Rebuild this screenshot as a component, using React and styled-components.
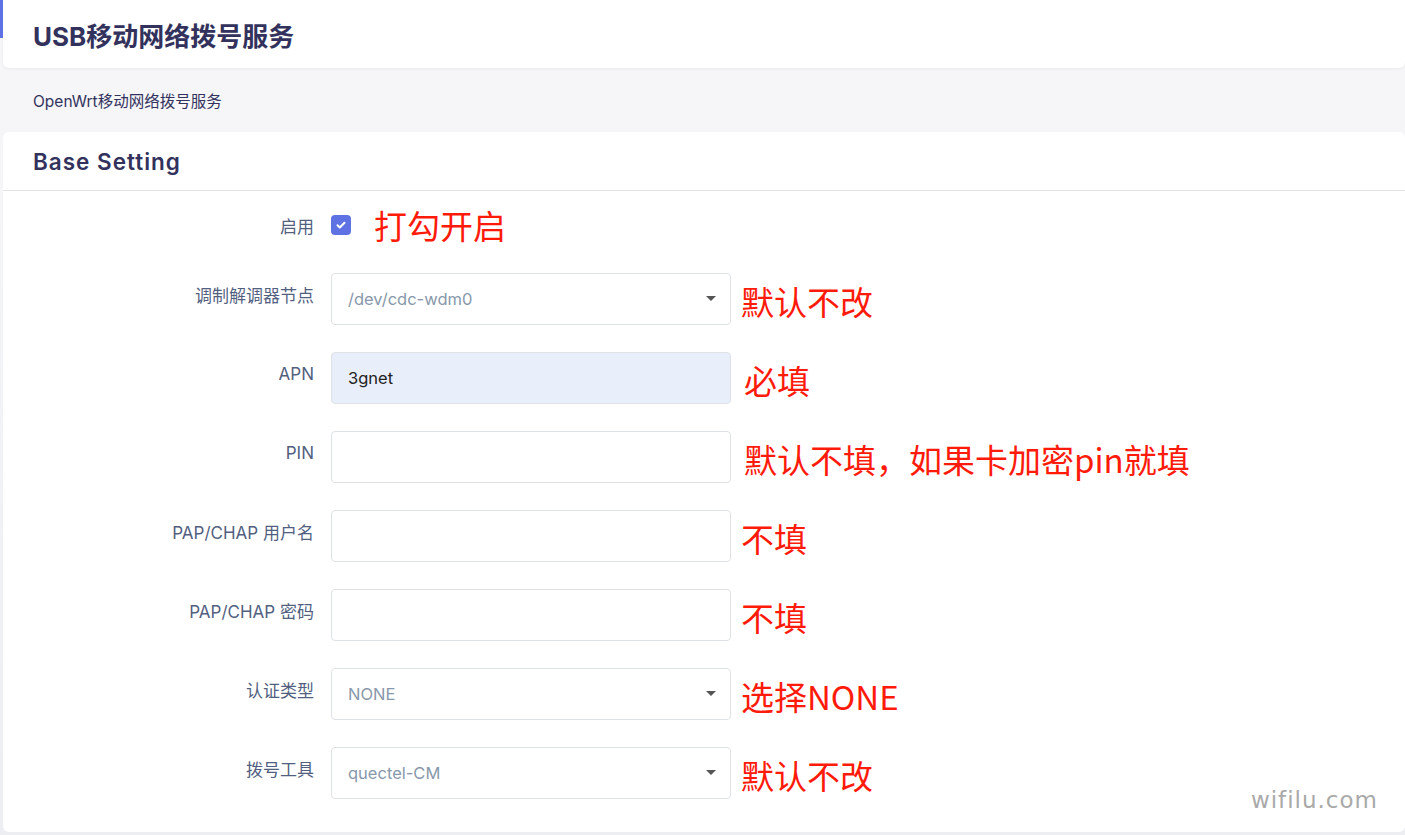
import React from 'react';
import styled, { createGlobalStyle } from 'styled-components';

const Global = createGlobalStyle`
  body { margin: 0; background: #eef0f3; font-family: Inter, "Noto Sans CJK SC", sans-serif; }
`;

const Page = styled.div`
  position: relative;
  width: 1405px;
  height: 835px;
  overflow: hidden;
  padding-left: 3px;
  box-sizing: border-box;
  background: linear-gradient(#f7f7f9, #eceef2);
`;

const Accent = styled.div`
  position: absolute;
  left: 0;
  top: 0;
  width: 3px;
  height: 38px;
  background: #5e72e4;
`;

const HeaderCard = styled.div`
  height: 68px;
  background: #fff;
  border-radius: 0 0 6px 6px;
  box-shadow: 0 1px 3px rgba(0,0,0,0.06);
  display: flex;
  align-items: center;
  padding-left: 30px;
`;

const Title = styled.h1`
  margin: 0;
  font-size: 26px;
  font-weight: 700;
  color: #32325d;
  font-family: Inter, "Noto Sans CJK SC", sans-serif;
`;

const Desc = styled.div`
  height: 64px;
  display: flex;
  align-items: center;
  padding-left: 30px;
  font-size: 15.5px;
  color: #32325d;
`;

const Card = styled.div`
  background: #fff;
  border-radius: 6px;
  height: 700px;
`;

const CardHead = styled.div`
  height: 58px;
  border-bottom: 1px solid #e3e3e6;
  display: flex;
  align-items: center;
  padding-left: 30px;
  font-size: 22.5px;
  font-weight: 600;
  letter-spacing: 1px;
  color: #32325d;
`;

const Body = styled.div`
  display: flex;
  flex-direction: column;
`;

const Row = styled.div`
  display: flex;
  align-items: center;
  height: ${p => (p.$first ? 68 : 79)}px;
`;

const Label = styled.div`
  width: 328px;
  text-align: right;
  padding-right: 17px;
  padding-bottom: ${p => (p.$first ? 0 : 8)}px;
  font-size: 17px;
  color: #525f7f;
  box-sizing: border-box;
`;

const Input = styled.div`
  width: 400px;
  height: 52px;
  box-sizing: border-box;
  border: 1px solid #dee2e6;
  border-radius: 4px;
  background: ${p => (p.$filled ? '#e8eefa' : '#fff')};
  display: flex;
  align-items: center;
  padding: 0 16px;
  font-size: 16.5px;
  color: ${p => (p.$filled ? '#222' : '#8898aa')};
  justify-content: space-between;
`;

const Caret = styled.span`
  width: 0;
  height: 0;
  border-left: 5px solid transparent;
  border-right: 5px solid transparent;
  border-top: 5px solid #555;
  margin-right: -2px;
`;

const Check = styled.div`
  width: 20px;
  height: 20px;
  border-radius: 4px;
  background: #5e72e4;
  display: flex;
  align-items: center;
  justify-content: center;
`;

const Note = styled.div`
  color: #ff1a0a;
  font-size: 33px;
  font-family: "Noto Sans CJK SC", sans-serif;
  margin-left: ${p => p.$ml || 10}px;
  padding-top: ${p => p.$pt ?? 4}px;
`;

const Watermark = styled.div`
  position: absolute;
  right: 27px;
  bottom: 22px;
  font-size: 23px;
  color: #a9a9a9;
  font-family: "DejaVu Sans", sans-serif;
  letter-spacing: 1px;
`;

const fields = [
  { label: '调制解调器节点', value: '/dev/cdc-wdm0', select: true, note: '默认不改' },
  { label: 'APN', value: '3gnet', filled: true, note: '必填', ml: 13 },
  { label: 'PIN', value: '', note: '默认不填，如果卡加密pin就填', ml: 13 },
  { label: 'PAP/CHAP 用户名', value: '', note: '不填' },
  { label: 'PAP/CHAP 密码', value: '', note: '不填' },
  { label: '认证类型', value: 'NONE', select: true, note: '选择NONE' },
  { label: '拨号工具', value: 'quectel-CM', select: true, note: '默认不改' },
];

export default function App() {
  return (
    <>
      <Global />
      <Page>
        <Accent />
        <HeaderCard><Title>USB移动网络拨号服务</Title></HeaderCard>
        <Desc>OpenWrt移动网络拨号服务</Desc>
        <Card>
          <CardHead>Base Setting</CardHead>
          <Body>
            <Row $first>
              <Label $first>启用</Label>
              <Check>
                <svg width="12" height="12" viewBox="0 0 12 12">
                  <path d="M2.5 6.2l2.3 2.3 4.7-4.8" stroke="#fff" strokeWidth="2" fill="none" strokeLinecap="round" strokeLinejoin="round" />
                </svg>
              </Check>
              <Note $ml={23} $pt={0}>打勾开启</Note>
            </Row>
            {fields.map(f => (
              <Row key={f.label}>
                <Label>{f.label}</Label>
                <Input $filled={f.filled}>
                  <span>{f.value}</span>
                  {f.select && <Caret />}
                </Input>
                <Note $ml={f.ml}>{f.note}</Note>
              </Row>
            ))}
          </Body>
        </Card>
        <Watermark>wifilu.com</Watermark>
      </Page>
    </>
  );
}
